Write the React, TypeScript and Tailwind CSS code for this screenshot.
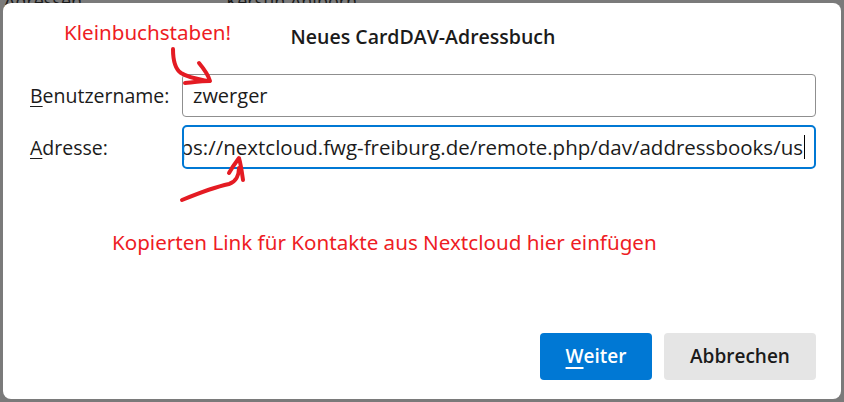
import { ReactNode } from "react";

function Label({ first, rest }: { first: string; rest: string }) {
  return (
    <span className="w-[152px] shrink-0 text-[19.5px] text-[#1b1b1b]">
      <span className="underline decoration-1 underline-offset-[3px]">{first}</span>
      {rest}
    </span>
  );
}

function Row({ children }: { children: ReactNode }) {
  return <div className="flex items-center">{children}</div>;
}

export default function App() {
  return (
    <div
      className="relative h-[402px] w-[844px] overflow-hidden bg-[#7a7a7a] p-[3px]"
      style={{ fontFamily: '"Open Sans", "Noto Sans", sans-serif' }}
    >
      {/* window behind the dialog */}
      <div className="absolute left-0 top-[-9px] flex h-[20px] w-full items-end text-[18px] leading-[20px] text-[#1a1a1a]">
        <span className="ml-[4px]">Adressen</span>
        <span className="ml-[144px]">Kerstin Ahlborn</span>
      </div>

      <div className="relative flex h-[396px] w-[838px] flex-col rounded-[8px] bg-white pl-[27px] pr-[25px]">
        <h1 className="pt-[19px] text-center text-[19.5px] font-semibold text-[#1b1b1b]">
          Neues CardDAV-Adressbuch
        </h1>

        <div className="mt-[23px] flex flex-col gap-[8px]">
          <Row>
            <Label first="B" rest="enutzername:" />
            <div className="flex h-[43px] flex-1 items-center rounded-[4px] border border-[#8f8f8f] px-[10px] text-[20px] text-[#1b1b1b]">
              zwerger
            </div>
          </Row>
          <Row>
            <Label first="A" rest="dresse:" />
            <div className="flex h-[44px] flex-1 items-center justify-end overflow-hidden whitespace-nowrap rounded-[5px] border-2 border-[#0078d4] pl-[9px] pr-[9px] text-[20.5px] text-[#1b1b1b]">
              <span>https://nextcloud.fwg-freiburg.de/remote.php/dav/addressbooks/us</span>
              <span className="ml-[1px] h-[24px] w-px shrink-0 bg-black" />
            </div>
          </Row>
        </div>

        <p
          className="mt-[58px] pl-[82px] text-[20.6px] text-[#ee1c24]"
          style={{ fontFamily: '"Noto Sans", sans-serif' }}
        >
          Kopierten Link für Kontakte aus Nextcloud hier einfügen
        </p>

        <div className="mt-auto mb-[19px] flex justify-end gap-[12px]">
          <button className="h-[47px] w-[112px] rounded-[4px] bg-[#0078d4] text-[19px] font-semibold text-white">
            <span className="underline decoration-2 underline-offset-[4px]">W</span>eiter
          </button>
          <button className="h-[47px] w-[152px] rounded-[4px] bg-[#e5e5e5] text-[19px] font-semibold text-[#1b1b1b]">
            Abbrechen
          </button>
        </div>

        {/* hand-drawn annotations */}
        <span
          className="absolute left-[61px] top-[14px] text-[20.6px] text-[#ee1c24]"
          style={{ fontFamily: '"Noto Sans", sans-serif' }}
        >
          Kleinbuchstaben!
        </span>
        <svg
          className="pointer-events-none absolute left-0 top-0"
          width="838"
          height="396"
          viewBox="0 0 838 396"
          fill="none"
          stroke="#e41b23"
          strokeWidth="4"
          strokeLinecap="round"
          strokeLinejoin="round"
        >
          <path d="M170 46 C170 58 172 66 178 70 C186 75 194 76 205 78" />
          <path d="M196 60 C201 66 205 71 207 78 C200 78 192 79 182 80" />
          <path d="M179 197 C196 190 212 184 226 181 C233 179 236 172 236 165" />
          <path d="M226 170 C230 163 233 159 236 155 C238 162 239 170 240 177" />
        </svg>
      </div>
    </div>
  );
}
